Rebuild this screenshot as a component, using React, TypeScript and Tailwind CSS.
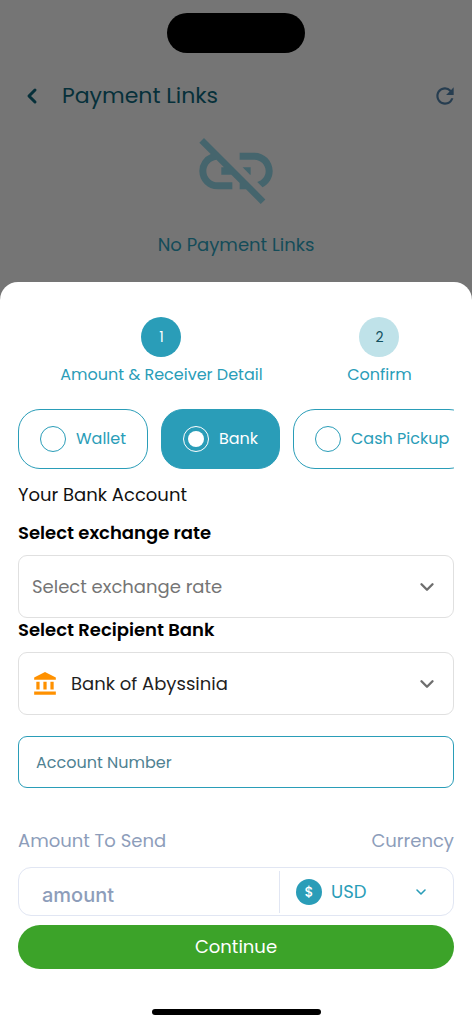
import { useState } from "react";
import type { ReactNode } from "react";
import { ChevronDown, ChevronLeft } from "lucide-react";
import { MdLinkOff, MdRefresh } from "react-icons/md";

const methods = [
  { id: "wallet", label: "Wallet", width: "w-[130px]" },
  { id: "bank", label: "Bank", width: "w-[119px]" },
  { id: "cash", label: "Cash Pickup", width: "w-[178px]" },
];

function BankIcon() {
  return (
    <svg
      viewBox="0 0 24 24"
      fill="currentColor"
      aria-hidden="true"
      className="pointer-events-none absolute left-3.5 size-[26px] text-[#ff9100]"
    >
      <path d="M4 10h3v7H4zM10.5 10h3v7h-3zM2 19h20v3H2zM17 10h3v7h-3zM12 1 2 6v2h20V6z" />
    </svg>
  );
}

function Step({ number, label, active }: { number: number; label: string; active?: boolean }) {
  return (
    <li className="flex flex-col items-center gap-1.5">
      <span
        className={`flex size-10 items-center justify-center rounded-full text-sm ${
          active ? "bg-[#2a9db8] text-white" : "bg-[#bfe2e9] text-[#12505f]"
        }`}
      >
        {number}
      </span>
      <span className="text-base leading-6 text-[#2a9db8]">{label}</span>
    </li>
  );
}

type SelectFieldProps = {
  id: string;
  label: string;
  options: string[];
  className: string;
  icon?: ReactNode;
};

function SelectField({ id, label, options, className, icon }: SelectFieldProps) {
  return (
    <div>
      <label htmlFor={id} className="block text-lg leading-6 font-semibold text-black">
        {label}
      </label>
      <div className="relative mt-2.5 flex h-[63px] items-center">
        {icon}
        <select
          id={id}
          className={`size-full appearance-none rounded-[9px] border border-[#e0e0e0] bg-white pr-12 text-lg outline-none ${className}`}
        >
          {options.map((option) => (
            <option key={option}>{option}</option>
          ))}
        </select>
        <ChevronDown
          size={22}
          strokeWidth={2.6}
          className="pointer-events-none absolute right-4 text-[#6e6e6e]"
        />
      </div>
    </div>
  );
}

export default function App() {
  const [method, setMethod] = useState("bank");

  return (
    <div className="flex min-h-screen flex-col bg-[#757575] font-['Poppins','Inter',sans-serif]">
      <div className="mx-auto mt-[13px] h-10 w-[138px] rounded-full bg-black" />

      <header className="mt-[19px] flex h-12 items-center pr-3.5 pl-5">
        <button type="button" aria-label="Back" className="text-[#06303a]">
          <ChevronLeft size={24} strokeWidth={3} />
        </button>
        <h1 className="ml-[18px] flex-1 text-[22px] leading-8 text-[#06303a]">Payment Links</h1>
        <button type="button" aria-label="Refresh" className="text-[#263d50]">
          <MdRefresh size={26} />
        </button>
      </header>

      <div className="mt-[7px] flex flex-col items-center pb-[23px]">
        <MdLinkOff size={88} className="text-[#45656d]" />
        <p className="mt-4 text-lg leading-7 text-[#144c59]">No Payment Links</p>
      </div>

      <main className="flex flex-1 flex-col rounded-t-[18px] bg-white px-[18px] pt-[35px] pb-[9px]">
        <ol className="flex justify-around">
          <Step number={1} label="Amount & Receiver Detail" active />
          <Step number={2} label="Confirm" />
        </ol>

        <form onSubmit={(e) => e.preventDefault()}>
          <div className="mt-[22px] flex gap-[13px] overflow-hidden">
            {methods.map(({ id, label, width }) => {
              const selected = method === id;
              return (
                <label
                  key={id}
                  className={`flex h-[60px] shrink-0 items-center gap-2.5 rounded-[22px] border border-[#2a9db8] pl-[21px] text-base ${width} ${
                    selected ? "bg-[#2a9db8] text-white" : "bg-white text-[#2a9db8]"
                  }`}
                >
                  <input
                    type="radio"
                    name="method"
                    value={id}
                    checked={selected}
                    onChange={() => setMethod(id)}
                    className="flex size-[26px] appearance-none items-center justify-center rounded-full border border-current before:size-4 before:rounded-full checked:before:bg-white"
                  />
                  {label}
                </label>
              );
            })}
          </div>

          <p className="mt-3.5 mb-3.5 text-lg leading-6 text-[#111111]">Your Bank Account</p>

          <SelectField
            id="rate"
            label="Select exchange rate"
            options={["Select exchange rate"]}
            className="pl-[13px] text-[#757575]"
          />
          <SelectField
            id="bank"
            label="Select Recipient Bank"
            options={["Bank of Abyssinia"]}
            className="pl-[52px] text-[#1f1f1f]"
            icon={<BankIcon />}
          />

          <input
            type="text"
            aria-label="Account Number"
            placeholder="Account Number"
            className="mt-[21px] block h-[52px] w-full rounded-[9px] border border-[#2a9db8] px-[17px] text-base outline-none placeholder:text-[#4f8292]"
          />

          <div className="mt-[41px] flex justify-between text-lg leading-6 text-[#8d9dba]">
            <label htmlFor="amount">Amount To Send</label>
            <label htmlFor="currency">Currency</label>
          </div>
          <div className="mt-3.5 flex h-[49px] items-center rounded-[13px] border border-[#e1e6f3]">
            <input
              id="amount"
              type="text"
              inputMode="decimal"
              placeholder="amount"
              className="h-full min-w-0 flex-1 pt-1.5 pl-[23px] font-['Inter',sans-serif] text-xl font-medium outline-none placeholder:text-[#8d9dba]"
            />
            <div className="relative flex h-[42px] w-[174px] items-center border-l border-[#e1e6f3]">
              <span className="pointer-events-none absolute left-4 flex size-[26px] items-center justify-center rounded-full bg-[#2a9db8] text-sm font-medium text-white">
                $
              </span>
              <select
                id="currency"
                className="size-full appearance-none pl-[51px] text-lg text-[#2a9db8] outline-none"
              >
                <option>USD</option>
              </select>
              <ChevronDown
                size={16}
                strokeWidth={2.4}
                className="pointer-events-none absolute right-6 text-[#2a9db8]"
              />
            </div>
          </div>

          <button
            type="submit"
            className="mt-[9px] h-11 w-full rounded-full bg-[#3ca329] text-lg text-white"
          >
            Continue
          </button>
        </form>

        <div className="mt-10 h-1.5 w-[169px] self-center rounded-full bg-black" />
      </main>
    </div>
  );
}
